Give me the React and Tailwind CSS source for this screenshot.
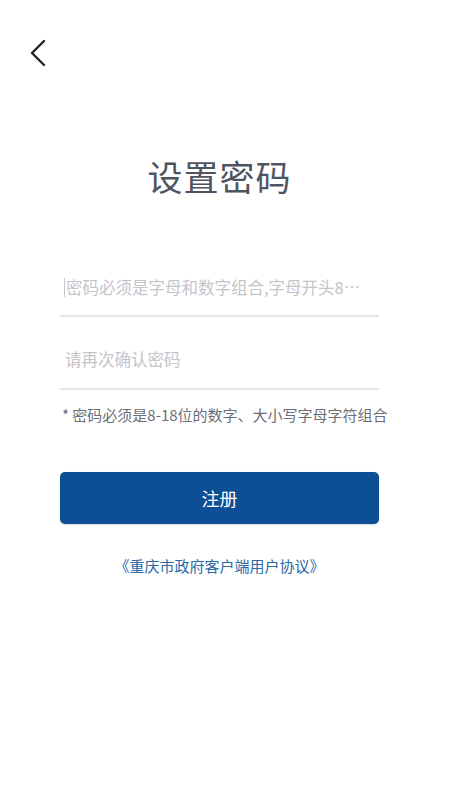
import React, { useState } from "react";

const cjk = { fontFamily: '"Noto Sans CJK SC", "Noto Sans", sans-serif' };

export default function App() {
  const [pwd, setPwd] = useState("");
  const [confirm, setConfirm] = useState("");

  return (
    <div className="min-h-screen w-full bg-white" style={cjk}>
      <div className="h-[80px] flex items-center pl-[26px] pt-[26px]">
        <button className="w-[24px] h-[30px] flex items-center justify-center">
          <svg width="18" height="28" viewBox="0 0 18 28" fill="none">
            <path d="M15 2 L3 14 L15 26" stroke="#222" strokeWidth="2.4" strokeLinecap="round" strokeLinejoin="round" />
          </svg>
        </button>
      </div>

      <div className="pl-[60px] pr-[71px]">
        <h1 className="text-center text-[35px] leading-none text-[#4f5460] mt-[78px] tracking-[1px]">
          设置密码
        </h1>

        <div className="mt-[68px] h-[56px] border-b-2 border-[#e3e4e8] flex items-center pl-[4px] pb-[2px]">
          <span className="w-px h-[19px] bg-[#c8c9ce] mr-[1px]" />
          <input
            value={pwd}
            onChange={(e) => setPwd(e.target.value)}
            placeholder="密码必须是字母和数字组合,字母开头8…"
            className="flex-1 min-w-0 outline-none bg-transparent text-[16.5px] placeholder:text-[#c4c5cb] text-[#333]"
          />
        </div>
        <div className="h-[73px] border-b-2 border-[#e3e4e8] flex items-center pl-[5px] pt-[14px]">
          <input
            value={confirm}
            onChange={(e) => setConfirm(e.target.value)}
            placeholder="请再次确认密码"
            className="flex-1 min-w-0 outline-none bg-transparent text-[16.5px] placeholder:text-[#c4c5cb] text-[#333]"
          />
        </div>
        <p className="mt-[17px] pl-[2px] text-[15px] leading-none text-[#6b6e76] whitespace-nowrap">
          * 密码必须是8-18位的数字、大小写字母字符组合
        </p>

        <button className="mt-[50px] w-full h-[52px] rounded-[5px] bg-[#0c4f96] text-white text-[18px] shadow-[0_1px_2px_rgba(0,0,0,0.15)]">
          注册
        </button>

        <p className="mt-[31px] text-center text-[15px] text-[#2c67a6] whitespace-nowrap">
          《重庆市政府客户端用户协议》
        </p>
      </div>
    </div>
  );
}
